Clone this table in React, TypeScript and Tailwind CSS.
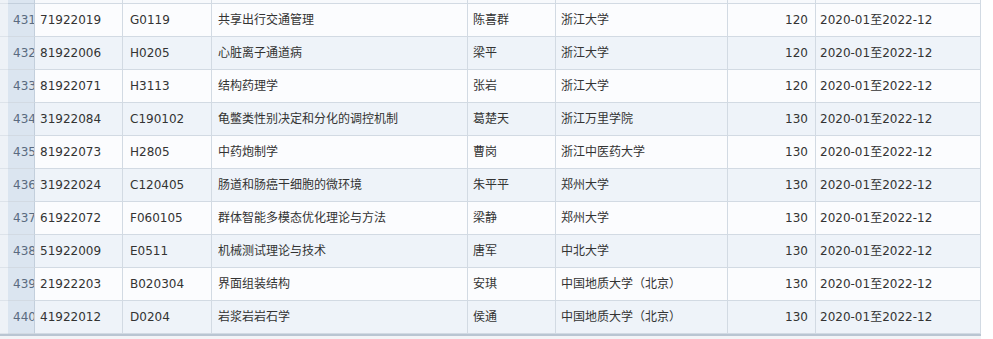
const rows = [
  ["431", "71922019", "G0119", "共享出行交通管理", "陈喜群", "浙江大学", "120"],
  ["432", "81922006", "H0205", "心脏离子通道病", "梁平", "浙江大学", "120"],
  ["433", "81922071", "H3113", "结构药理学", "张岩", "浙江大学", "120"],
  ["434", "31922084", "C190102", "龟鳖类性别决定和分化的调控机制", "葛楚天", "浙江万里学院", "130"],
  ["435", "81922073", "H2805", "中药炮制学", "曹岗", "浙江中医药大学", "130"],
  ["436", "31922024", "C120405", "肠道和肠癌干细胞的微环境", "朱平平", "郑州大学", "130"],
  ["437", "61922072", "F060105", "群体智能多模态优化理论与方法", "梁静", "郑州大学", "130"],
  ["438", "51922009", "E0511", "机械测试理论与技术", "唐军", "中北大学", "130"],
  ["439", "21922203", "B020304", "界面组装结构", "安琪", "中国地质大学（北京）", "130"],
  ["440", "41922012", "D0204", "岩浆岩岩石学", "侯通", "中国地质大学（北京）", "130"],
];

const cols = "grid grid-cols-[8px_27px_88px_89px_256px_88px_172px_88px_165px]";

function Row({ r, i }: { r: string[]; i: number }) {
  const bg = i % 2 === 1 ? "bg-[#eef3f9]" : "bg-[#fbfcfe]";
  const cell = "h-[33px] border-r border-b border-[#d2dae3] flex items-center overflow-hidden whitespace-nowrap";
  return (
    <div className={cols}>
      <div className="h-[33px] bg-[#eef2f7] border-b border-[#dde3ea]" />
      <div className={`${cell} bg-[#dbe5f0] pl-[5px] text-[#5a6b80] border-r-[#c3cfdc]`}>{r[0]}</div>
      <div className={`${cell} ${bg} pl-[5px]`}>{r[1]}</div>
      <div className={`${cell} ${bg} pl-[7px]`}>{r[2]}</div>
      <div className={`${cell} ${bg} pl-[6px]`}>{r[3]}</div>
      <div className={`${cell} ${bg} pl-[5px]`}>{r[4]}</div>
      <div className={`${cell} ${bg} pl-[5px]`}>{r[5]}</div>
      <div className={`${cell} ${bg} justify-end pr-[7px]`}>{r[6]}</div>
      <div className={`${cell} ${bg} pl-[4px]`}>2020-01至2022-12</div>
    </div>
  );
}

export default function App() {
  return (
    <div
      className="w-[993px] h-[339px] overflow-hidden bg-white text-[12px] text-[#333]"
      style={{ fontFamily: '"DejaVu Sans", "Noto Sans CJK SC", sans-serif' }}
    >
      <div className="w-[981px]">
        <div className={cols}>
          <div className="h-[4px] bg-[#eef2f7] border-b border-[#dde3ea]" />
          <div className="h-[4px] bg-[#dbe5f0] border-r border-b border-[#c3cfdc]" />
          <div className="h-[4px] bg-[#f7f9fc] border-r border-b border-[#d2dae3]" />
          <div className="h-[4px] bg-[#f7f9fc] border-r border-b border-[#d2dae3]" />
          <div className="h-[4px] bg-[#f7f9fc] border-r border-b border-[#d2dae3]" />
          <div className="h-[4px] bg-[#f7f9fc] border-r border-b border-[#d2dae3]" />
          <div className="h-[4px] bg-[#f7f9fc] border-r border-b border-[#d2dae3]" />
          <div className="h-[4px] bg-[#f7f9fc] border-r border-b border-[#d2dae3]" />
          <div className="h-[4px] bg-[#f7f9fc] border-r border-b border-[#d2dae3]" />
        </div>
        {rows.map((r, i) => (
          <Row key={r[0]} r={r} i={i} />
        ))}
        <div className="h-[2px] bg-[#b9c5d2]" />
        <div className="h-[3px] bg-[#f2f4f7]" />
      </div>
    </div>
  );
}
